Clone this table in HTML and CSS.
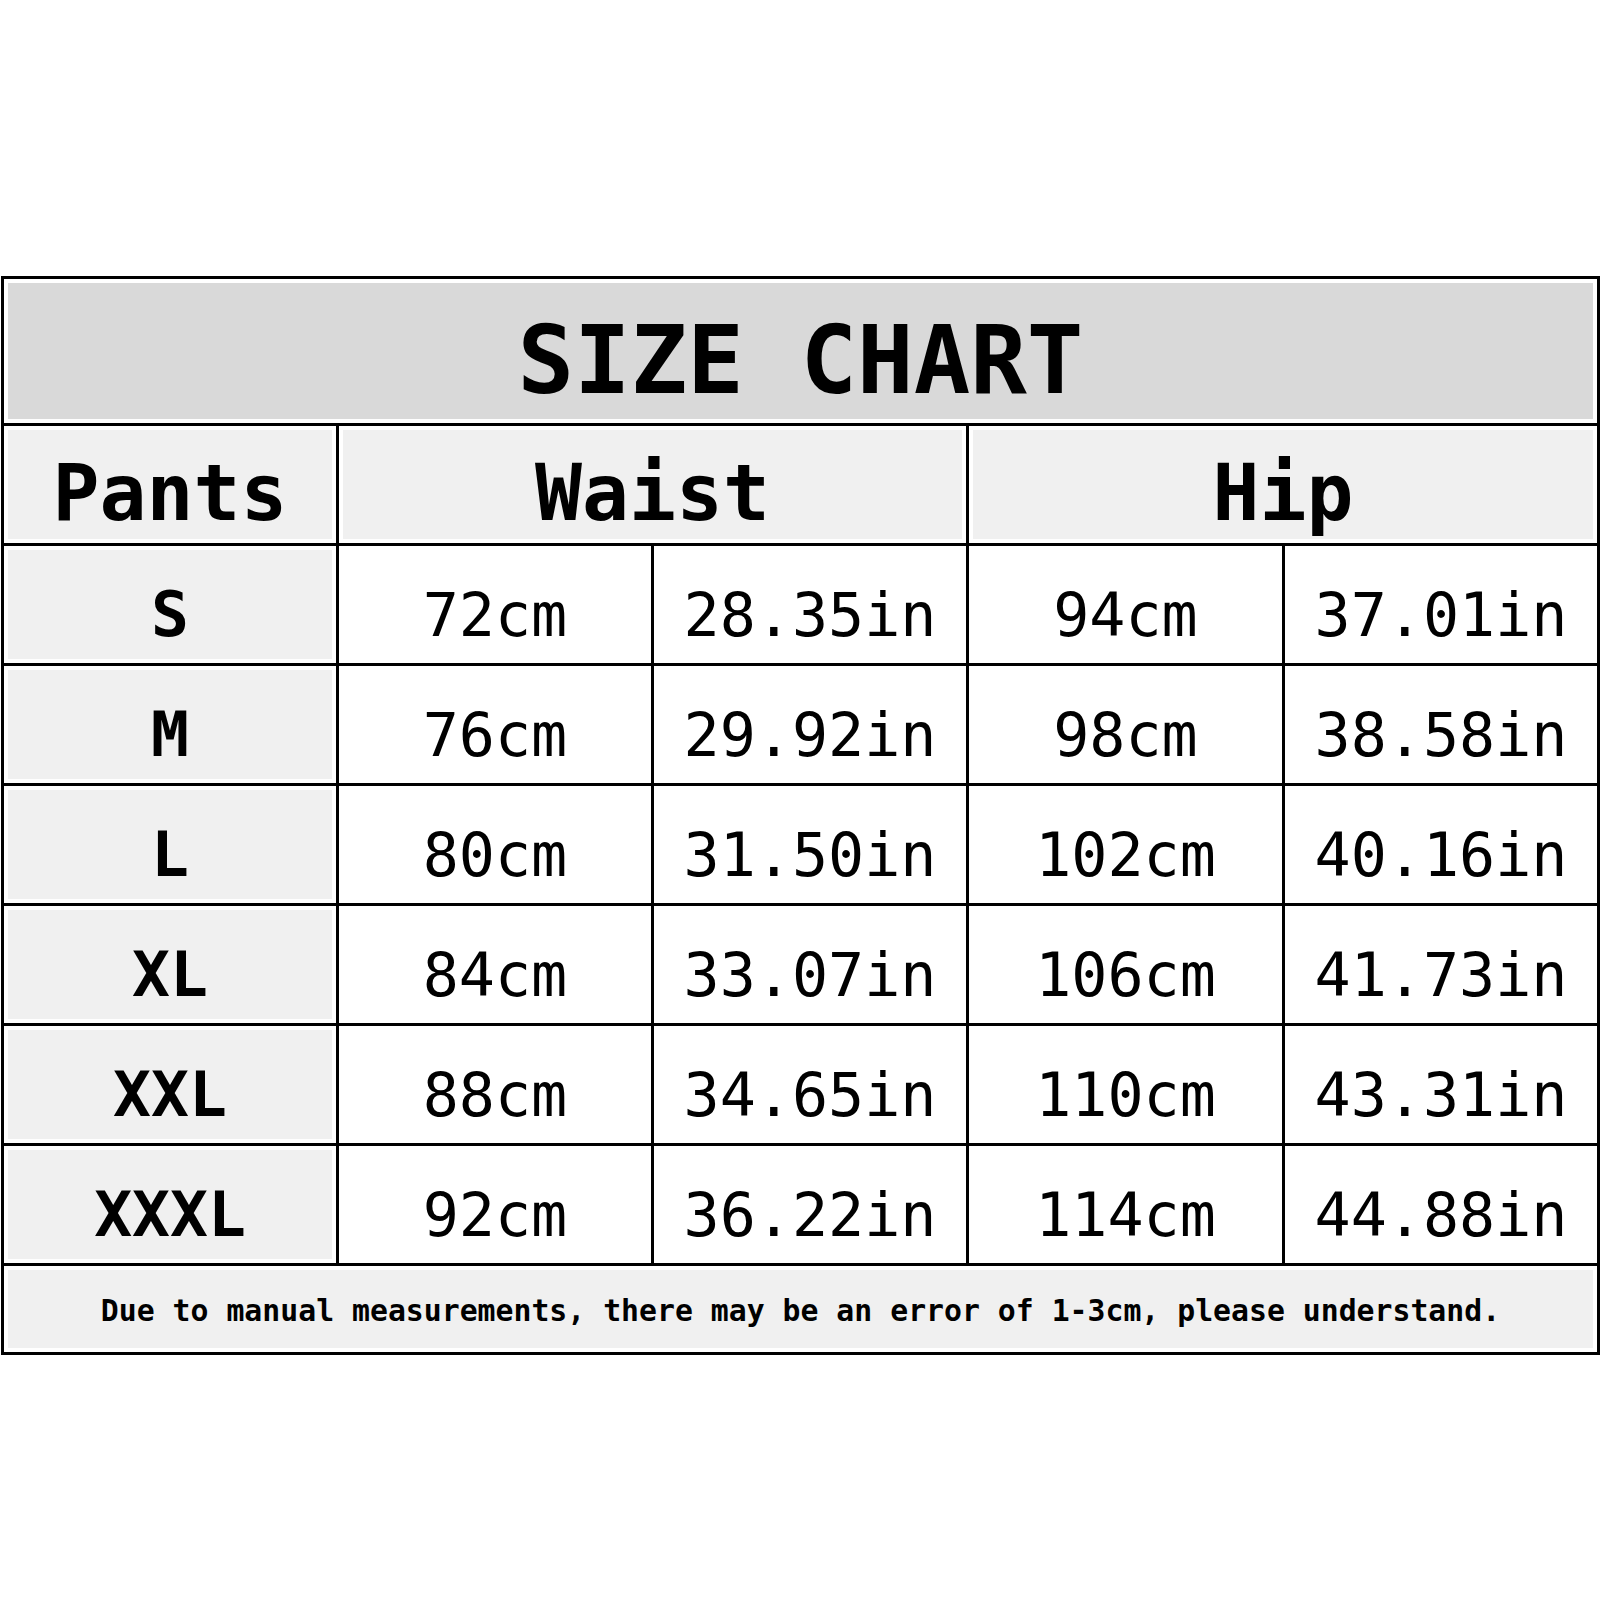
FILE: index.html
```html
<!DOCTYPE html>
<html>
<head>
<meta charset="utf-8">
<link rel="stylesheet" href="styles.css">
</head>
<body>
<div class="chart">
  <div class="cell title span5">SIZE CHART</div>
  <div class="cell head">Pants</div>
  <div class="cell head span2">Waist</div>
  <div class="cell head span2">Hip</div>

  <div class="cell size">S</div>
  <div class="cell val">72cm</div><div class="cell val">28.35in</div><div class="cell val">94cm</div><div class="cell val">37.01in</div>

  <div class="cell size">M</div>
  <div class="cell val">76cm</div><div class="cell val">29.92in</div><div class="cell val">98cm</div><div class="cell val">38.58in</div>

  <div class="cell size">L</div>
  <div class="cell val">80cm</div><div class="cell val">31.50in</div><div class="cell val">102cm</div><div class="cell val">40.16in</div>

  <div class="cell size">XL</div>
  <div class="cell val">84cm</div><div class="cell val">33.07in</div><div class="cell val">106cm</div><div class="cell val">41.73in</div>

  <div class="cell size">XXL</div>
  <div class="cell val">88cm</div><div class="cell val">34.65in</div><div class="cell val">110cm</div><div class="cell val">43.31in</div>

  <div class="cell size">XXXL</div>
  <div class="cell val">92cm</div><div class="cell val">36.22in</div><div class="cell val">114cm</div><div class="cell val">44.88in</div>

  <div class="cell note span5">Due to manual measurements, there may be an error of 1-3cm, please understand.</div>
</div>
</body>
</html>
```
FILE: styles.css
```css
html, body {
  margin: 0;
  padding: 0;
  background: #ffffff;
}

body {
  width: 1600px;
  height: 1600px;
  padding-top: 276px;
  padding-left: 1px;
  box-sizing: border-box;
  font-family: "DejaVu Sans Mono", "Liberation Mono", monospace;
  color: #000;
}

.chart {
  width: 1599px;
  display: grid;
  grid-template-columns: 332px 312px 312px 313px 312px;
  grid-template-rows: 144px 117px repeat(6, 117px) 86px;
  gap: 3px;
  padding: 3px;
  box-sizing: border-box;
  background: #000;
}

.cell {
  display: flex;
  align-items: center;
  justify-content: center;
  background: #fff;
  box-sizing: border-box;
  white-space: pre;
  line-height: 1;
}

.span5 { grid-column: span 5; }
.span2 { grid-column: span 2; }

.title {
  background: #d9d9d9;
  box-shadow: inset 0 0 0 4px #fff;
  font-size: 94px;
  font-weight: bold;
  padding-top: 20px;
}

.head {
  background: #f0f0f0;
  box-shadow: inset 0 0 0 4px #fff;
  font-size: 78px;
  font-weight: bold;
  padding-top: 16px;
}

.size {
  background: #f0f0f0;
  box-shadow: inset 0 0 0 4px #fff;
  font-size: 63px;
  font-weight: bold;
  padding-top: 20px;
}

.val {
  font-size: 60px;
  padding-top: 20px;
}

.note {
  background: #f0f0f0;
  box-shadow: inset 0 0 0 4px #fff;
  font-size: 29.8px;
  font-weight: bold;
  padding-top: 4px;
}
```
